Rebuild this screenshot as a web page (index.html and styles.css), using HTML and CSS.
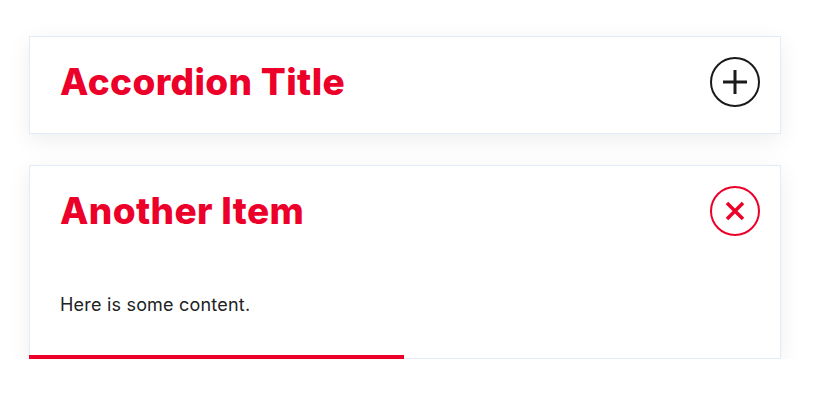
FILE: index.html
```html
<!DOCTYPE html>
<html>
<head>
<meta charset="utf-8">
<link rel="stylesheet" href="styles.css">
</head>
<body>
<div class="accordion">
  <div class="item">
    <div class="header">
      <h2 class="title">Accordion Title</h2>
      <span class="icon icon-open">
        <svg width="50" height="50" viewBox="0 0 50 50"><circle cx="25" cy="25" r="24" fill="none" stroke="#1a1a1a" stroke-width="2"/><path d="M13 25H37M25 13V37" stroke="#1a1a1a" stroke-width="3" fill="none"/></svg>
      </span>
    </div>
  </div>
  <div class="item active">
    <div class="header">
      <h2 class="title">Another Item</h2>
      <span class="icon icon-close">
        <svg width="50" height="50" viewBox="0 0 50 50"><circle cx="25" cy="25" r="24" fill="none" stroke="#ec0029" stroke-width="2"/><path d="M17 17L33 33M33 17L17 33" stroke="#ec0029" stroke-width="3.5" fill="none"/></svg>
      </span>
    </div>
    <div class="content">Here is some content.</div>
    <div class="progress" style="width:50%"></div>
  </div>
</div>
</body>
</html>
```
FILE: styles.css
```css
html, body {
  margin: 0;
  padding: 0;
  background: #ffffff;
}
body {
  font-family: "Inter", "Noto Sans", sans-serif;
}
.accordion {
  width: 752px;
  margin: 36px 0 0 29px;
  display: flex;
  flex-direction: column;
  gap: 31px;
}
.item {
  position: relative;
  background: #fff;
  border: 1px solid #e1ecf6;
  box-shadow: 0 6px 22px rgba(0, 0, 0, 0.07);
}
.header {
  display: flex;
  justify-content: space-between;
  align-items: flex-start;
  padding: 20px 20px 26px 30px;
}
.title {
  margin: 0;
  font-size: 37px;
  line-height: 50px;
  font-weight: 800;
  color: #ec0029;
  letter-spacing: 0.35px;
}
.icon {
  display: block;
  width: 50px;
  height: 50px;
}
.icon svg { display: block; }
.content {
  padding: 31px 30px 41px 30px;
  font-size: 18px;
  line-height: 24px;
  color: #222;
  letter-spacing: 0.2px;
}
.progress {
  position: absolute;
  left: -1px;
  bottom: -1px;
  height: 4px;
  background: #ec0029;
}
```
